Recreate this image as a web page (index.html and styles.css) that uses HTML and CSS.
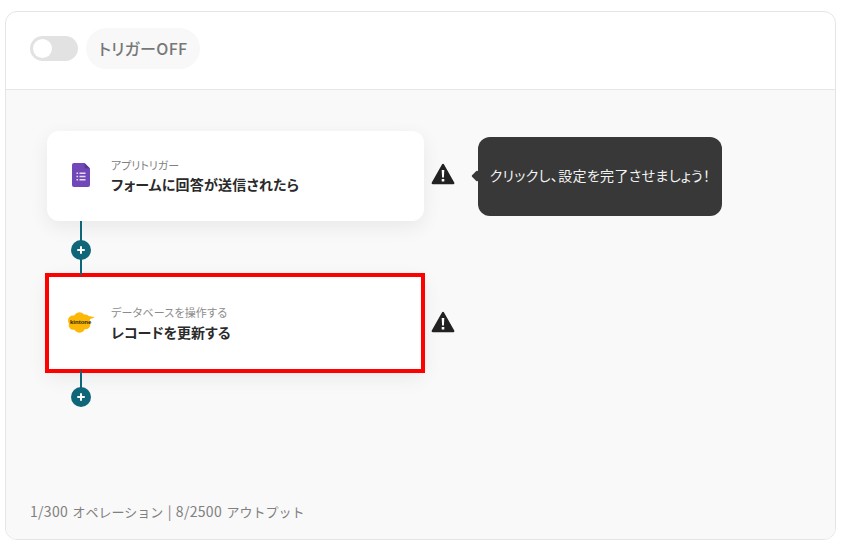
FILE: index.html
```html
<!DOCTYPE html>
<html lang="ja">
<head>
<meta charset="utf-8">
<title>フロー</title>
<link rel="stylesheet" href="styles.css">
</head>
<body>
<main class="panel">
  <header class="head">
    <span class="toggle"><span class="knob"></span></span>
    <span class="pill">トリガーOFF</span>
  </header>
  <section class="flow">
    <div class="row row-first">
      <div class="card">
        <svg class="ic-forms" viewBox="0 0 18 24" width="18" height="24">
          <path fill="#7248b9" d="M2 0h10.500L18 5.500V22a2 2 0 0 1-2 2H2a2 2 0 0 1-2-2V2a2 2 0 0 1 2-2z"/>
          <path fill="#563696" d="M12.500 0L18 5.500h-4a1.500 1.500 0 0 1-1.500-1.500z"/>
          <path fill="#e6dcf5" d="M4.500 9.500h1.600v1.600H4.500zM7.500 9.500h6v1.600h-6zM4.500 12.700h1.600v1.600H4.500zM7.500 12.700h6v1.600h-6zM4.500 15.900h1.600v1.600H4.500zM7.500 15.900h6v1.600h-6z"/>
        </svg>
        <div class="txt">
          <div class="sub">アプリトリガー</div>
          <div class="title">フォームに回答が送信されたら</div>
        </div>
      </div>
      <svg class="warn" viewBox="0 0 24 22" width="24" height="22">
        <path fill="#222" stroke="#222" stroke-width="2.400" stroke-linejoin="round" d="M12 2L1.800 20h20.400z"/>
        <path fill="#fff" d="M10.700 7h2.600l-.4 7.500h-1.800zM10.700 16h2.600v2.600h-2.600z"/>
      </svg>
      <div class="tip">クリックし、設定を完了させましょう！</div>
    </div>
    <div class="link link-a"><span class="plus"></span></div>
    <div class="row row-second">
      <div class="card card-sel">
        <svg class="ic-kin" viewBox="0 0 28 21" width="28" height="21">
          <g fill="#fdb707">
            <circle cx="6" cy="8.500" r="5"/>
            <circle cx="12.500" cy="6" r="5.800"/>
            <circle cx="18" cy="7.500" r="5"/>
            <circle cx="6.500" cy="13" r="4.800"/>
            <circle cx="12.500" cy="15" r="5.800"/>
            <circle cx="18.500" cy="12.500" r="4.800"/>
            <path d="M19 3.500L28 5.300l-6.500 2.500z"/>
          </g>
          <text class="kin-t" x="3" y="11.500">kintone</text>
        </svg>
        <div class="txt">
          <div class="sub">データベースを操作する</div>
          <div class="title">レコードを更新する</div>
        </div>
      </div>
      <svg class="warn" viewBox="0 0 24 22" width="24" height="22">
        <path fill="#222" stroke="#222" stroke-width="2.400" stroke-linejoin="round" d="M12 2L1.800 20h20.400z"/>
        <path fill="#fff" d="M10.700 7h2.600l-.4 7.500h-1.800zM10.700 16h2.600v2.600h-2.600z"/>
      </svg>
    </div>
    <div class="link link-b"><span class="plus"></span></div>
    <footer class="foot"><span class="num">1/300</span> オペレーション <span class="sep">|</span> <span class="num">8/2500</span> アウトプット</footer>
  </section>
</main>
</body>
</html>
```
FILE: styles.css
```css
* { box-sizing: border-box; }
html, body { margin: 0; height: 100%; background: #fff; }
body {
  padding: 11px 6px 9px 5px;
  font-family: "Noto Sans CJK JP", "Noto Sans", sans-serif;
  font-feature-settings: "palt";
}
.panel {
  height: 529px;
  border: 1px solid #e5e5e5;
  border-radius: 12px;
  overflow: hidden;
  display: flex;
  flex-direction: column;
  background: #fff;
}
.head {
  height: 78px;
  flex: none;
  border-bottom: 1px solid #e6e6e6;
  display: flex;
  align-items: center;
  padding: 0 0 5px 24px;
  gap: 8px;
}
.toggle {
  width: 48px;
  height: 25px;
  border-radius: 13px;
  background: #e2e2e2;
  padding: 3px;
  display: block;
}
.knob {
  display: block;
  width: 19px;
  height: 19px;
  border-radius: 50%;
  background: #fff;
}
.pill {
  height: 41px;
  width: 114px;
  border-radius: 21px;
  background: #f8f8f8;
  color: #777;
  font-size: 16px;
  font-weight: 500;
  letter-spacing: .3px;
  line-height: 41px;
  text-align: center;
  white-space: nowrap;
}
.flow {
  flex: 1;
  background: #f9f9f9;
  padding: 41px 0 0 41px;
  display: flex;
  flex-direction: column;
  align-items: flex-start;
}
.row { display: flex; align-items: center; }
.card {
  width: 377px;
  background: #fff;
  border-radius: 12px;
  box-shadow: 0 6px 20px rgba(0, 0, 0, .07);
  display: flex;
  align-items: center;
}
.row-first .card { height: 90px; padding-left: 25px; }
.row-second .card { height: 96px; width: 376px; padding-left: 20px; }
.card-sel { outline: 4px solid #ff0000; outline-offset: -2px; border-radius: 0; }
.ic-forms { flex: none; margin-right: 21px; margin-top: -2px; }
.ic-kin { flex: none; margin-right: 16px; margin-top: -1px; }
.kin-t { font-size: 6px; font-weight: 700; fill: #2a1f00; font-family: "Liberation Sans", sans-serif; }
.txt { display: flex; flex-direction: column; }
.sub { font-size: 11px; line-height: 14px; color: #808080; }
.row-second .sub { color: #8c8c8c; letter-spacing: .2px; }
.title { font-size: 14px; line-height: 20px; font-weight: 700; color: #2a2a2a; margin-top: 2px; white-space: nowrap; }
.row-first .title { letter-spacing: .2px; }
.row-second .title { margin-top: 3px; }
.warn { flex: none; margin-left: 7px; }
.row-first .warn { margin-top: -4px; }
.row-second .warn { margin-left: 8px; margin-top: -3px; }
.tip {
  position: relative;
  margin-left: 23px;
  width: 244px;
  height: 79px;
  background: #383838;
  border-radius: 12px;
  color: #f2f2f2;
  font-size: 14px;
  letter-spacing: .35px;
  line-height: 77px;
  text-align: center;
  white-space: nowrap;
}
.tip::before {
  content: "";
  position: absolute;
  left: -5px;
  top: 35px;
  width: 8px;
  height: 8px;
  background: #383838;
  transform: rotate(45deg);
  border-radius: 1px;
}
.link {
  position: relative;
  width: 2px;
  background: #0f6679;
  margin-left: 33px;
}
.link-a { height: 54px; }
.link-b { height: 25px; }
.plus {
  position: absolute;
  left: -9px;
  width: 20px;
  height: 20px;
  border-radius: 50%;
  background: #0f6679;
}
.link-a .plus { top: 19px; }
.link-b .plus { top: 16px; }
.plus::before, .plus::after {
  content: "";
  position: absolute;
  background: #fff;
  border-radius: 1px;
}
.plus::before { left: 6px; top: 9px; width: 8px; height: 2px; }
.plus::after { left: 9px; top: 6px; width: 2px; height: 8px; }
.foot {
  margin-top: auto;
  margin-left: -17px;
  margin-bottom: 17px;
  font-size: 13px;
  font-feature-settings: normal;
  word-spacing: 1.500px;
  line-height: 20px;
  color: #808080;
  white-space: nowrap;
}
.num { font-size: 14px; letter-spacing: .3px; }
.sep { font-size: 14px; }
```
